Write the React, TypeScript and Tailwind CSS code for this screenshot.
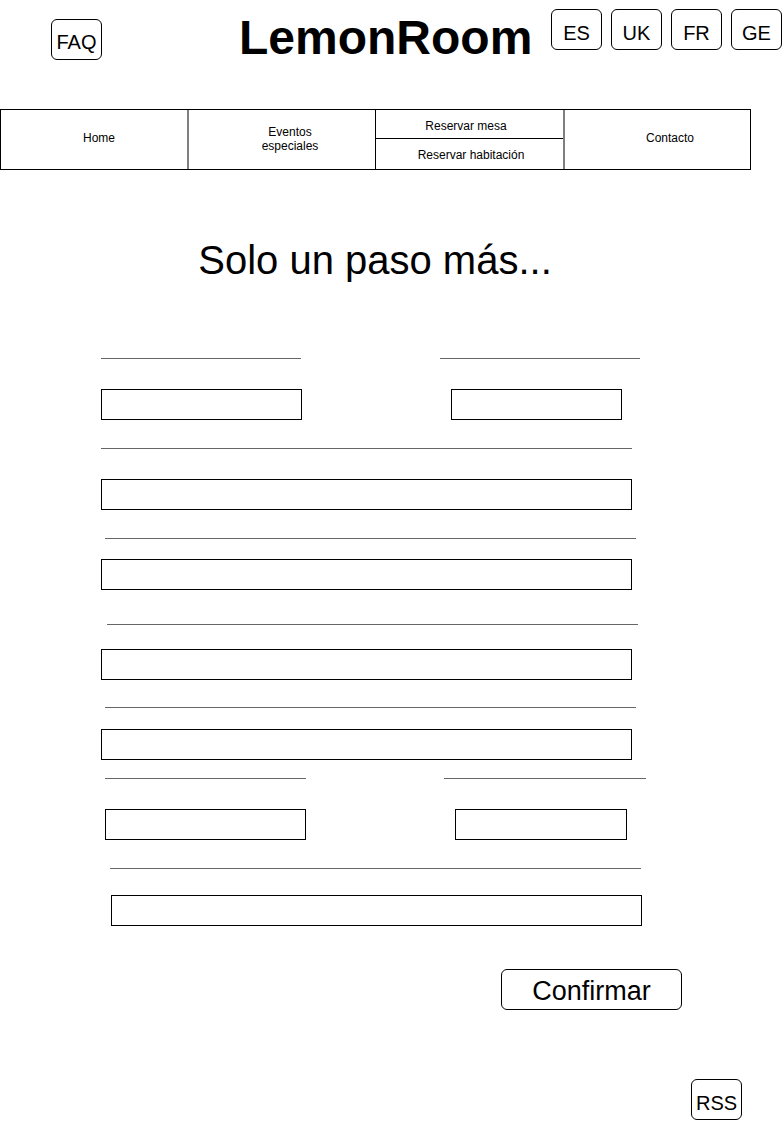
const langs = ['ES', 'UK', 'FR', 'GE'];

export default function App() {
  return (
    <div className="flex flex-col items-start w-[782px] min-h-[1128px] bg-white text-black font-['Liberation_Sans',Arial,sans-serif]">
      {/* Header */}
      <header className="flex items-start w-full h-[109px]">
        <button className="ml-[51px] mt-[19px] w-[51px] h-[41px] border border-black rounded-md flex justify-center pt-[12px] text-[20px] leading-none">
          FAQ
        </button>
        <h1 className="ml-[137px] mt-[14px] text-[48px] font-bold leading-none">LemonRoom</h1>
        <div className="ml-auto mt-[9px] flex gap-[9px]">
          {langs.map((l) => (
            <button
              key={l}
              className="w-[51px] h-[41px] border border-black rounded-md flex justify-center pt-[13px] text-[20px] leading-none"
            >
              {l}
            </button>
          ))}
        </div>
      </header>

      {/* Nav */}
      <nav className="flex w-[751px] h-[61px] border border-black text-[12px] leading-[14px]">
        <div className="w-[188px] border-r-2 border-[#808080] flex items-center justify-center pl-[10px] pb-[3px]">Home</div>
        <div className="w-[187px] border-r border-black flex items-center justify-center pl-[16px] pb-[1px] text-center">
          Eventos
          <br />
          especiales
        </div>
        <div className="w-[189px] border-r-2 border-[#808080] flex flex-col">
          <div className="h-[29px] border-b border-black flex items-center justify-center pr-[7px] pt-[3px]">Reservar mesa</div>
          <div className="flex-1 flex items-center justify-center pl-[3px] pt-[1px]">Reservar habitación</div>
        </div>
        <div className="flex-1 flex items-center justify-center pl-[25px] pb-[3px]">Contacto</div>
      </nav>

      <h2 className="mt-[70px] w-[750px] text-center text-[40px] leading-none">Solo un paso más...</h2>

      {/* Form */}
      <div className="mt-[78px] flex">
        <div className="ml-[101px] w-[200px] h-px bg-[#666666]" />
        <div className="ml-[139px] w-[200px] h-px bg-[#666666]" />
      </div>
      <div className="mt-[30px] flex">
        <div className="ml-[101px] w-[201px] h-[31px] border border-black" />
        <div className="ml-[149px] w-[171px] h-[31px] border border-black" />
      </div>

      <div className="mt-[28px] ml-[101px] w-[531px] h-px bg-[#666666]" />
      <div className="mt-[30px] ml-[101px] w-[531px] h-[31px] border border-black" />

      <div className="mt-[28px] ml-[105px] w-[531px] h-px bg-[#666666]" />
      <div className="mt-[20px] ml-[101px] w-[531px] h-[31px] border border-black" />

      <div className="mt-[34px] ml-[107px] w-[531px] h-px bg-[#666666]" />
      <div className="mt-[24px] ml-[101px] w-[531px] h-[31px] border border-black" />

      <div className="mt-[27px] ml-[105px] w-[531px] h-px bg-[#666666]" />
      <div className="mt-[21px] ml-[101px] w-[531px] h-[31px] border border-black" />

      <div className="mt-[18px] flex">
        <div className="ml-[105px] w-[201px] h-px bg-[#666666]" />
        <div className="ml-[138px] w-[202px] h-px bg-[#666666]" />
      </div>
      <div className="mt-[30px] flex">
        <div className="ml-[105px] w-[201px] h-[31px] border border-black" />
        <div className="ml-[149px] w-[172px] h-[31px] border border-black" />
      </div>

      <div className="mt-[28px] ml-[110px] w-[531px] h-px bg-[#666666]" />
      <div className="mt-[26px] ml-[111px] w-[531px] h-[31px] border border-black" />

      <button className="mt-[43px] ml-[501px] w-[181px] h-[41px] border border-black rounded-md flex items-center justify-center pt-[3px] text-[27px] leading-none">
        Confirmar
      </button>

      <button className="mt-[69px] ml-[691px] w-[51px] h-[41px] border border-black rounded-md flex justify-center pt-[13px] text-[20px] leading-none">
        RSS
      </button>
    </div>
  );
}
